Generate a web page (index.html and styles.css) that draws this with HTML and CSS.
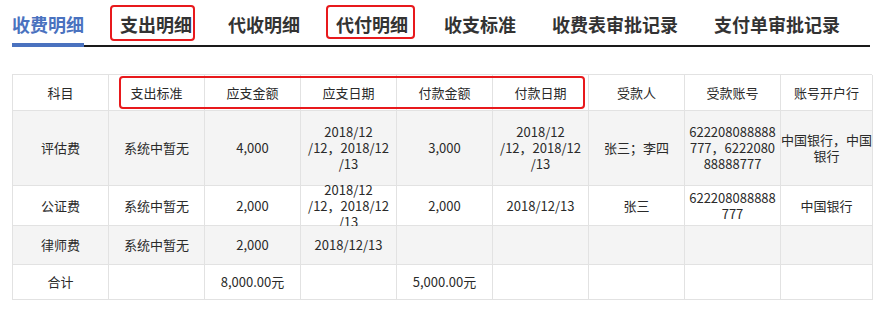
FILE: index.html
```html
<!DOCTYPE html>
<html lang="zh">
<head>
<meta charset="utf-8">
<link rel="stylesheet" href="styles.css">
</head>
<body>
<nav class="tabs">
  <div class="tab active">收费明细</div>
  <div class="tab">支出明细<span class="mark mark-1"></span></div>
  <div class="tab">代收明细</div>
  <div class="tab">代付明细<span class="mark mark-2"></span></div>
  <div class="tab">收支标准</div>
  <div class="tab">收费表审批记录</div>
  <div class="tab">支付单审批记录</div>
</nav>
<div class="table-wrap">
  <div class="grid">
    <div class="cell h">科目</div>
    <div class="cell h">支出标准</div>
    <div class="cell h">应支金额</div>
    <div class="cell h">应支日期</div>
    <div class="cell h">付款金额</div>
    <div class="cell h">付款日期</div>
    <div class="cell h">受款人</div>
    <div class="cell h">受款账号</div>
    <div class="cell h">账号开户行</div>

    <div class="cell r1 alt">评估费</div>
    <div class="cell r1 alt">系统中暂无</div>
    <div class="cell r1 alt">4,000</div>
    <div class="cell r1 alt">2018/12<br>/12，2018/12<br>/13</div>
    <div class="cell r1 alt">3,000</div>
    <div class="cell r1 alt">2018/12<br>/12，2018/12<br>/13</div>
    <div class="cell r1 alt">张三；李四</div>
    <div class="cell r1 alt">622208088888<br>777，6222080<br>88888777</div>
    <div class="cell r1 alt">中国银行，中国<br>银行</div>

    <div class="cell r2">公证费</div>
    <div class="cell r2">系统中暂无</div>
    <div class="cell r2">2,000</div>
    <div class="cell r2">2018/12<br>/12，2018/12<br>/13</div>
    <div class="cell r2">2,000</div>
    <div class="cell r2">2018/12/13</div>
    <div class="cell r2">张三</div>
    <div class="cell r2">622208088888<br>777</div>
    <div class="cell r2">中国银行</div>

    <div class="cell r3 alt">律师费</div>
    <div class="cell r3 alt">系统中暂无</div>
    <div class="cell r3 alt">2,000</div>
    <div class="cell r3 alt">2018/12/13</div>
    <div class="cell r3 alt"></div>
    <div class="cell r3 alt"></div>
    <div class="cell r3 alt"></div>
    <div class="cell r3 alt"></div>
    <div class="cell r3 alt"></div>

    <div class="cell r4">合计</div>
    <div class="cell r4"></div>
    <div class="cell r4">8,000.00元</div>
    <div class="cell r4"></div>
    <div class="cell r4">5,000.00元</div>
    <div class="cell r4"></div>
    <div class="cell r4"></div>
    <div class="cell r4"></div>
    <div class="cell r4"></div>
  </div>
  <span class="mark mark-head"></span>
</div>
</body>
</html>
```
FILE: styles.css
```css
html, body {
  margin: 0;
  padding: 0;
  background: #ffffff;
}
body {
  font-family: "Noto Sans CJK SC", "Noto Sans", sans-serif;
  color: #333333;
}
.tabs {
  display: flex;
  gap: 36px;
  margin: 0 19px 0 12px;
  border-bottom: 2px solid #1a1a1a;
}
.tab {
  position: relative;
  font-size: 18px;
  font-weight: bold;
  line-height: 24px;
  padding: 12px 0 7px;
  margin-bottom: -2px;
  border-bottom: 4px solid transparent;
  color: #333333;
  white-space: nowrap;
}
.tab.active {
  color: #4a72bf;
  border-bottom-color: #4a72bf;
}
.mark {
  position: absolute;
  border: 2.5px solid #e8191c;
  border-radius: 4px;
  box-sizing: border-box;
  pointer-events: none;
}
.mark-1 {
  left: -10px;
  top: 5px;
  width: 85px;
  height: 36px;
}
.mark-2 {
  left: -10px;
  top: 5px;
  width: 89px;
  height: 34px;
}
.table-wrap {
  position: relative;
  margin: 27px 0 0 12px;
  width: 860px;
}
.grid {
  display: grid;
  grid-template-columns: repeat(8, 96px) 92px;
  grid-template-rows: 36px 75px 40px 39px 35px;
  border-top: 1px solid #e2e2e2;
  border-left: 1px solid #e2e2e2;
  box-sizing: border-box;
  font-size: 13px;
  line-height: 16px;
  color: #2a2a2a;
}
.cell {
  position: relative;
  display: flex;
  align-items: center;
  justify-content: center;
  text-align: center;
  border-right: 1px solid #e2e2e2;
  border-bottom: 1px solid #e2e2e2;
  background: #ffffff;
  padding: 0 3px;
  white-space: nowrap;
}
.cell.alt {
  background: #f4f4f4;
}
.mark-head {
  left: 107px;
  top: 2px;
  width: 466px;
  height: 33px;
}
```
